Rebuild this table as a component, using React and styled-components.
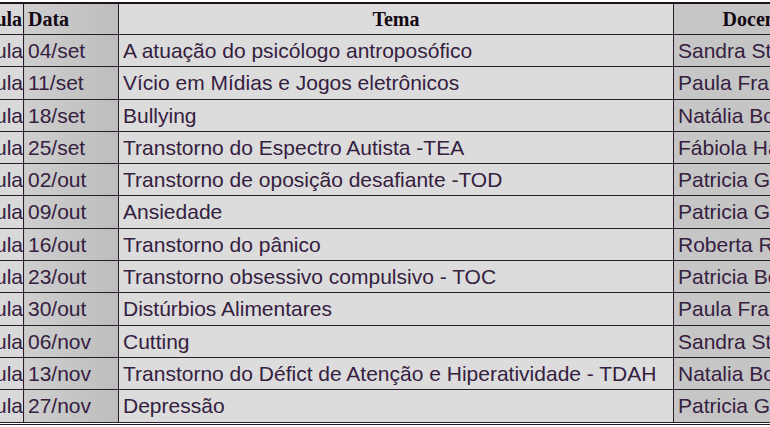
import React from 'react'
import styled, { createGlobalStyle } from 'styled-components'

const GlobalStyle = createGlobalStyle`
  html, body {
    margin: 0;
    padding: 0;
    background: #ffffff;
    overflow: hidden;
  }
`

const aulas = [
  { data: '04/set', tema: 'A atuação do psicólogo antroposófico', docente: 'Sandra Steiner' },
  { data: '11/set', tema: 'Vício em Mídias e Jogos eletrônicos', docente: 'Paula Francisco' },
  { data: '18/set', tema: 'Bullying', docente: 'Natália Bonfim' },
  { data: '25/set', tema: 'Transtorno do Espectro Autista -TEA', docente: 'Fábiola Hahn' },
  { data: '02/out', tema: 'Transtorno de oposição desafiante -TOD', docente: 'Patricia Gomes' },
  { data: '09/out', tema: 'Ansiedade', docente: 'Patricia Gomes' },
  { data: '16/out', tema: 'Transtorno do pânico', docente: 'Roberta Rocha' },
  { data: '23/out', tema: 'Transtorno obsessivo compulsivo - TOC', docente: 'Patricia Bonfim' },
  { data: '30/out', tema: 'Distúrbios Alimentares', docente: 'Paula Francisco' },
  { data: '06/nov', tema: 'Cutting', docente: 'Sandra Steiner' },
  { data: '13/nov', tema: 'Transtorno do Défict de Atenção e Hiperatividade - TDAH', docente: 'Natalia Bonfim' },
  { data: '27/nov', tema: 'Depressão', docente: 'Patricia Gomes' },
]

const Page = styled.div`
  width: 770px;
  height: 427px;
  overflow: hidden;
  padding-top: 2px;
  box-sizing: border-box;
`

// the table is wider than the window: its first and last columns are cut off
const Table = styled.table`
  width: 864px;
  margin-left: -24px;
  border-collapse: collapse;
  table-layout: fixed;
  border-top: 2px solid #1e121e;
  border-bottom: 3px double #2a1a2a;
`

const Col = styled.col`
  width: ${p => p.$w}px;
`

const bg = {
  aula: '#d9d9d9',
  data: 'linear-gradient(to right, #cecece, #bdbdbd)',
  tema: '#dcdcdc',
  docente: 'linear-gradient(to right, #c6c6c6, #c3c3c3)',
}

const Th = styled.th`
  border: 1px solid #2a1a2a;
  background: ${p => bg[p.$kind]};
  font-family: "Liberation Serif", "Times New Roman", serif;
  font-weight: bold;
  font-size: 20px;
  color: #140814;
  line-height: 30px;
  padding: 0 ${p => (p.$kind === 'aula' ? '1px' : '4px')} 0 4px;
  text-align: ${p => (p.$kind === 'aula' || p.$kind === 'data' ? 'left' : 'center')};
  white-space: nowrap;
  overflow: hidden;
`

const Td = styled.td`
  border: 1px solid #2a1a2a;
  background: ${p => bg[p.$kind]};
  font-family: "Liberation Sans", Arial, sans-serif;
  font-size: 21px;
  color: #35203f;
  line-height: 31.3px;
  padding: 0 ${p => (p.$kind === 'aula' ? '1px' : '4px')} 0 4px;
  text-align: left;
  white-space: nowrap;
  overflow: hidden;
`

export default function App() {
  return (
    <>
      <GlobalStyle />
      <Page>
        <Table>
          <colgroup>
            <Col $w={47} />
            <Col $w={95} />
            <Col $w={555} />
            <Col $w={167} />
          </colgroup>
          <thead>
            <tr>
              <Th $kind="aula">Aula</Th>
              <Th $kind="data">Data</Th>
              <Th $kind="tema">Tema</Th>
              <Th $kind="docente">Docente</Th>
            </tr>
          </thead>
          <tbody>
            {aulas.map((a, i) => (
              <tr key={i}>
                <Td $kind="aula">Aula</Td>
                <Td $kind="data">{a.data}</Td>
                <Td $kind="tema">{a.tema}</Td>
                <Td $kind="docente">{a.docente}</Td>
              </tr>
            ))}
          </tbody>
        </Table>
      </Page>
    </>
  )
}
